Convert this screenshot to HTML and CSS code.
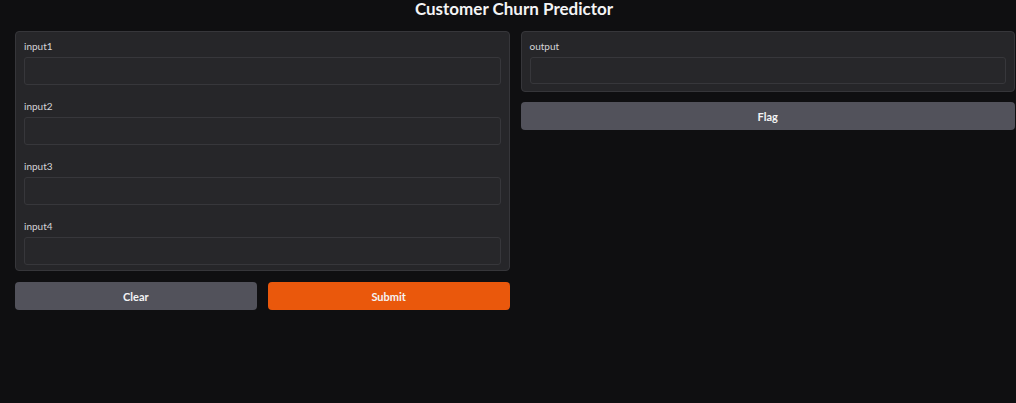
FILE: index.html
```html
<!DOCTYPE html>
<html>
<head>
<meta charset="utf-8">
<link rel="stylesheet" href="styles.css">
</head>
<body>
<h1 class="title">Customer Churn Predictor</h1>
<div class="row">
  <div class="col">
    <div class="panel">
      <div class="field"><label class="lbl">input1</label><div class="box"></div></div>
      <div class="field"><label class="lbl">input2</label><div class="box"></div></div>
      <div class="field"><label class="lbl">input3</label><div class="box"></div></div>
      <div class="field"><label class="lbl">input4</label><div class="box"></div></div>
    </div>
    <div class="btns">
      <button class="btn secondary">Clear</button>
      <button class="btn primary">Submit</button>
    </div>
  </div>
  <div class="col">
    <div class="panel out-panel">
      <div class="field"><label class="lbl">output</label><div class="box out"></div></div>
    </div>
    <button class="btn secondary">Flag</button>
  </div>
</div>
</body>
</html>
```
FILE: styles.css
```css
html, body {
  margin: 0;
  background: #0f0f11;
  font-family: "Lato", "Open Sans", sans-serif;
  color: #f4f4f5;
}
.title {
  margin: 0;
  padding-left: 12px;
  height: 31px;
  line-height: 18px;
  font-size: 17px;
  font-weight: 700;
  text-align: center;
  color: #f4f4f5;
}
.row {
  display: flex;
  gap: 11px;
  padding: 0 1px 0 15px;
  align-items: flex-start;
}
.col {
  flex: 1;
  display: flex;
  flex-direction: column;
  gap: 10px;
}
.col:first-child { gap: 11px; }
.panel {
  background: #262629;
  border: 1px solid #36363a;
  border-radius: 4px;
  padding: 8px 8px 5px;
  display: flex;
  flex-direction: column;
  gap: 15px;
}
.out-panel { padding-bottom: 7px; }
.lbl {
  display: block;
  font-size: 10px;
  line-height: 12px;
  margin-bottom: 5px;
  color: #d4d4d8;
}
.box {
  height: 26px;
  border: 1px solid #37373b;
  border-radius: 3px;
  background: #27272a;
}
.out { height: 25px; }
.btns {
  display: flex;
  gap: 11px;
}
.btns .btn { flex: 1; }
.btn {
  height: 28px;
  border: none;
  border-radius: 4px;
  font-family: inherit;
  font-size: 11px;
  font-weight: 700;
  color: #f4f4f5;
  cursor: pointer;
}
.secondary { background: #52525b; }
.primary { background: #ea580c; }
```
